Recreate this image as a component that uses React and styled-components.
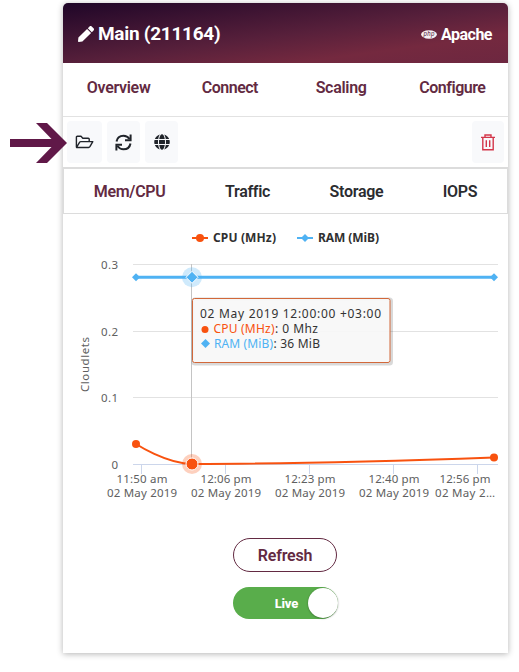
import React from "react";
import styled, { createGlobalStyle } from "styled-components";
import { FaPen, FaGlobe } from "react-icons/fa";

const maroon = "#632a42";
const orange = "#f8520f";
const blue = "#4fb2f3";

const GlobalStyle = createGlobalStyle`
  * { box-sizing: border-box; }
  body { margin: 0; background: #fff; font-family: Roboto, "Liberation Sans", sans-serif; }
  svg { display: block; }
`;

const Page = styled.main`
  position: relative;
  height: 672px;
  padding: 3px 0 0 63px;
  overflow: hidden;
`;

const Card = styled.section`
  width: 445px;
  height: 650px;
  background: #fff;
  border-radius: 5px 5px 0 0;
  box-shadow: 0 1px 6px rgba(0, 0, 0, 0.3);
  display: flex;
  flex-direction: column;
`;

const Header = styled.header`
  height: 60px;
  border-radius: 5px 5px 0 0;
  padding: 2px 16px 0 15px;
  display: flex;
  align-items: center;
  color: #fff;
  background: linear-gradient(to bottom right, #1f0628 0%, #58203b 52%, #74293f 76%, #6d2740 100%);
`;

const Title = styled.h1`
  flex: 1;
  margin: 0 0 2px 4px;
  font-size: 19px;
  font-weight: 700;
  letter-spacing: -0.28px;
`;

const Runtime = styled.span`
  margin-left: 4px;
  font-size: 16px;
  font-weight: 700;
  letter-spacing: -0.5px;
`;

const Nav = styled.nav`
  height: 54px;
  padding-bottom: 5px;
  border-bottom: 1px solid #e2e2e2;
  display: grid;
  grid-template-columns: repeat(4, 1fr);
  align-items: center;
  justify-items: center;
`;

const NavLink = styled.a`
  color: ${maroon};
  font-size: 16px;
  font-weight: 600;
  letter-spacing: ${(p) => p.$spacing || "-0.3px"};
`;

const Toolbar = styled.div`
  height: 50px;
  padding: 4px 4px 0;
  display: flex;
  align-items: flex-start;
  gap: 5px;
`;

const ToolButton = styled.button`
  width: ${(p) => p.$width || 33}px;
  height: 42px;
  padding: 0;
  border: 0;
  border-radius: 4px;
  background: #f8f9fb;
  color: #20242a;
  display: grid;
  place-items: center;
  margin-left: ${(p) => (p.$end ? "auto" : 0)};
`;

const Tabs = styled.div`
  height: 47px;
  border: 1px solid #dcdcdc;
  border-top-width: 2px;
  display: flex;
  align-items: center;
  justify-content: space-around;
`;

const Tab = styled.span`
  color: ${(p) => (p.$active ? maroon : "#2b2c30")};
  font-size: 16px;
  font-weight: 600;
  letter-spacing: -0.3px;
`;

const Chart = styled.svg`
  font-family: "Noto Sans", "Open Sans", sans-serif;
  font-size: 11.5px;
  fill: #606060;
`;

const Actions = styled.div`
  display: flex;
  flex-direction: column;
  align-items: flex-start;
  gap: 15px;
  margin: 24px 0 0 170px;
`;

const RefreshButton = styled.button`
  width: 104px;
  height: 34px;
  padding: 0;
  border: 1px solid ${maroon};
  border-radius: 17px;
  background: #fff;
  color: ${maroon};
  font: 600 16px Roboto, sans-serif;
  letter-spacing: -0.2px;
`;

const Toggle = styled.div`
  width: 105px;
  height: 32px;
  border-radius: 16px;
  background: #59ad4b;
  display: flex;
  align-items: center;
  justify-content: flex-end;
  gap: 10px;
  color: #fff;
  font-size: 13px;
  font-weight: 800;
  letter-spacing: -0.2px;
`;

const Knob = styled.span`
  width: 30px;
  height: 30px;
  border-radius: 50%;
  background: #fff;
  box-shadow: 0 0.5px 2px rgba(0, 0, 0, 0.4);
`;

const Pointer = styled.svg`
  position: absolute;
  left: 10px;
  top: 123px;
`;

const FolderIcon = () => (
  <svg width="19" height="14" viewBox="0 0 19 14" fill="none" stroke="#20242a" strokeWidth="1.4" strokeLinejoin="round">
    <path d="M1.4 12V2.200Q1.400 1.300 2.300 1.300H6L7.800 3.200H13.300Q14.200 3.200 14.200 4.100V6.500M1.500 12.400L4.700 7.200Q5.100 6.600 5.800 6.600H17.800L14.900 11.700Q14.400 12.500 13.600 12.500H1.500Z" />
  </svg>
);

const RestartIcon = () => (
  <svg width="17" height="17" viewBox="0 0 17 17" fill="none" stroke="#20242a" strokeWidth="2">
    <path d="M1.500 7.500C2.200 3.700 5.100 1.700 8.500 1.700C11 1.700 13 2.800 14.600 5M15.500 9.500C14.800 13.300 11.900 15.300 8.500 15.300C6 15.300 4 14.200 2.400 12" />
    <path d="M15.600 0.500V6.200H10M1.400 16.500V10.800H7" />
  </svg>
);

const TrashIcon = () => (
  <svg width="14" height="17" viewBox="0 0 14 17" fill="none" stroke="#d3364a" strokeWidth="1.4">
    <path d="M0 3.4H14M4 3V1H10V3M1.8 3.8V15.8H12.2V3.8M5.300 6.2V13M8.700 6.2V13" />
  </svg>
);

const PhpIcon = () => (
  <svg width="16" height="9" viewBox="0 0 16 9">
    <ellipse cx="8" cy="4.5" rx="7.900" ry="4.2" fill="#f5eff2" />
    <text x="2.500" y="6" fontSize="6.500" fontStyle="italic" textLength="11" fill="#5b2743">php</text>
  </svg>
);

const ticks = [
  { x: 141.5, time: "11:50 am", date: "02 May 2019" },
  { x: 225.5, time: "12:06 pm", date: "02 May 2019" },
  { x: 309.5, time: "12:23 pm", date: "02 May 2019" },
  { x: 393.5, time: "12:40 pm", date: "02 May 2019" },
  { x: 477.5, labelX: 465, time: "12:56 pm", date: "02 May 2…", width: 60 },
];

const levels = [
  { y: 264.5, label: "0.3" },
  { y: 331.5, label: "0.2" },
  { y: 397.5, label: "0.1" },
  { y: 464.5, label: "0", axis: true },
];

const Diamond = ({ x, y, r }) => (
  <path d={`M${x} ${y - r}l${r} ${r}l${-r} ${r}l${-r} ${-r}z`} fill={blue} />
);

const UsageChart = () => (
  <Chart width="445" height="300" viewBox="63 214 445 300">
    {levels.map((l) => (
      <g key={l.label}>
        <path d={`M133 ${l.y}H498`} stroke={l.axis ? "#ccd6eb" : "#e2e2e2"} />
        <text x="118" y={l.y + 4} textAnchor="end" textLength={l.axis ? 7 : 17}>{l.label}</text>
      </g>
    ))}
    {ticks.map((t) => (
      <g key={t.x} textAnchor="middle">
        <path d={`M${t.x} 465V474`} stroke="#ccd6eb" />
        <text x={t.labelX || t.x + 0.5} y="483" textLength="51">{t.time}</text>
        <text x={t.labelX || t.x + 0.5} y="497" textLength={t.width || 70}>{t.date}</text>
      </g>
    ))}
    <text transform="translate(89 364.5) rotate(-90)" textAnchor="middle" textLength="55">Cloudlets</text>
    <path d="M191.5 264V464" stroke="#c4c4c4" />

    <path d="M136 444C136 444 166 463.5 192 464C312 464 494 457.5 494 457.5" fill="none" stroke={orange} strokeWidth="2" />
    <circle cx="192" cy="464" r="10" fill={orange} opacity="0.27" />
    <circle cx="192" cy="464" r="6" fill={orange} stroke="#fff" />
    <circle cx="136" cy="444" r="4" fill={orange} />
    <circle cx="494" cy="457.5" r="4" fill={orange} />

    <path d="M136 277.3H494" stroke={blue} strokeWidth="3" />
    <circle cx="192" cy="277.3" r="10" fill={blue} opacity="0.27" />
    <path d="M192 271.3l6 6l-6 6l-6-6z" fill={blue} stroke="#fff" />
    <Diamond x={136} y={277.3} r={4} />
    <Diamond x={494} y={277.3} r={4} />

    <g fontWeight="700" fill="#303030" fontSize="12">
      <path d="M192 238H208" stroke={orange} strokeWidth="2" />
      <circle cx="200" cy="238" r="4" fill={orange} />
      <text x="213" y="242" textLength="63">CPU (MHz)</text>
      <path d="M297 238H313" stroke={blue} strokeWidth="2" />
      <Diamond x={305} y={238} r={4} />
      <text x="318" y="242" textLength="61">RAM (MiB)</text>
    </g>

    <rect x="193" y="299" width="198.5" height="65" rx="2" fill="none" stroke="#000" strokeOpacity="0.15" strokeWidth="3" />
    <rect x="192.5" y="298.5" width="197.5" height="64" rx="2" fill="#f7f7f7" fillOpacity="0.92" stroke="#d2683a" />
    <g fill="#333" fontSize="12">
      <text x="200" y="318" textLength="181">02 May 2019 12:00:00 +03:00</text>
      <circle cx="205" cy="329.5" r="3.5" fill={orange} />
      <text x="213.5" y="333" textLength="61" fill={orange}>CPU (MHz)</text>
      <text x="275" y="333" textLength="43">: 0 Mhz</text>
      <Diamond x={205.5} y={343.5} r={4.5} />
      <text x="214" y="348" textLength="59" fill={blue}>RAM (MiB)</text>
      <text x="273.5" y="348" textLength="46.5">: 36 MiB</text>
    </g>
  </Chart>
);

export default function App() {
  return (
    <Page>
      <GlobalStyle />
      <Card>
        <Header>
          <FaPen size={16} />
          <Title>Main (211164)</Title>
          <PhpIcon />
          <Runtime>Apache</Runtime>
        </Header>
        <Nav>
          <NavLink>Overview</NavLink>
          <NavLink $spacing="-0.5px">Connect</NavLink>
          <NavLink>Scaling</NavLink>
          <NavLink $spacing="-0.5px">Configure</NavLink>
        </Nav>
        <Toolbar>
          <ToolButton $width={35} aria-label="Files"><FolderIcon /></ToolButton>
          <ToolButton aria-label="Restart"><RestartIcon /></ToolButton>
          <ToolButton aria-label="Open in browser"><FaGlobe size={16} /></ToolButton>
          <ToolButton $width={32} $end aria-label="Delete"><TrashIcon /></ToolButton>
        </Toolbar>
        <Tabs>
          <Tab $active>Mem/CPU</Tab>
          <Tab>Traffic</Tab>
          <Tab>Storage</Tab>
          <Tab>IOPS</Tab>
        </Tabs>
        <UsageChart />
        <Actions>
          <RefreshButton>Refresh</RefreshButton>
          <Toggle>Live<Knob /></Toggle>
        </Actions>
      </Card>
      <Pointer width="57" height="40" viewBox="0 0 57 40">
        <path d="M26 0H37L57 20L37 40H26L41.500 24H0V16H41.500Z" fill="#601848" />
      </Pointer>
    </Page>
  );
}
